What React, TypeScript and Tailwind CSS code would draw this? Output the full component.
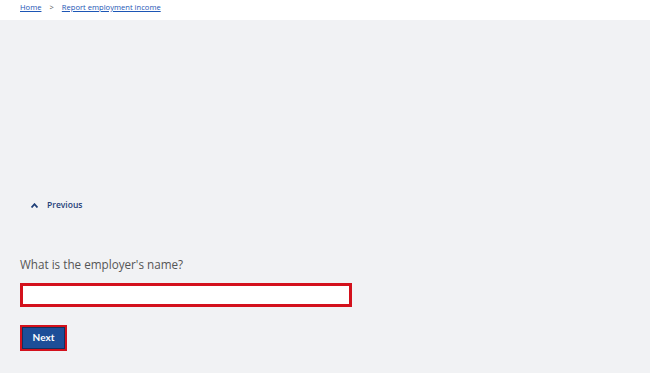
export default function App() {
  return (
    <div className="flex h-[373px] w-[650px] flex-col bg-[#f1f2f4] font-['Open_Sans',sans-serif]">
      {/* Breadcrumb bar */}
      <div className="flex h-[20px] items-start gap-[8px] bg-white pl-[20px] pt-[2px] text-[7.6px] text-[#1d56b5]">
        <a href="#" className="underline">Home</a>
        <span className="text-[#555]">&gt;</span>
        <a href="#" className="underline">Report employment income</a>
      </div>

      <div className="flex flex-col px-[20px] pt-[179px]">
        <button className="flex h-[12px] items-center gap-[9px] pl-[11px] text-[8.5px] font-semibold text-[#1f3f78]">
          <svg width="7" height="5" viewBox="0 0 7 5">
            <path d="M0.5 4.5 L3.5 1.2 L6.5 4.5" fill="none" stroke="#1f3f78" strokeWidth="1.8" />
          </svg>
          Previous
        </button>

        <label className="mt-[45px] text-[11.7px] leading-[16px] text-[#555]">What is the employer's name?</label>

        <input
          type="text"
          className="mt-[11px] h-[24px] w-[332px] border-[3px] border-[#d3111c] bg-white outline-none"
        />

        <div className="mt-[16px]">
          <button className="h-[26px] w-[47px] border-2 border-[#d3111c] bg-[#1d4e98] text-[10px] font-bold text-white outline outline-1 outline-offset-[-3px] outline-[#14305e] font-['Lato',sans-serif]">
            Next
          </button>
        </div>
      </div>
    </div>
  );
}
